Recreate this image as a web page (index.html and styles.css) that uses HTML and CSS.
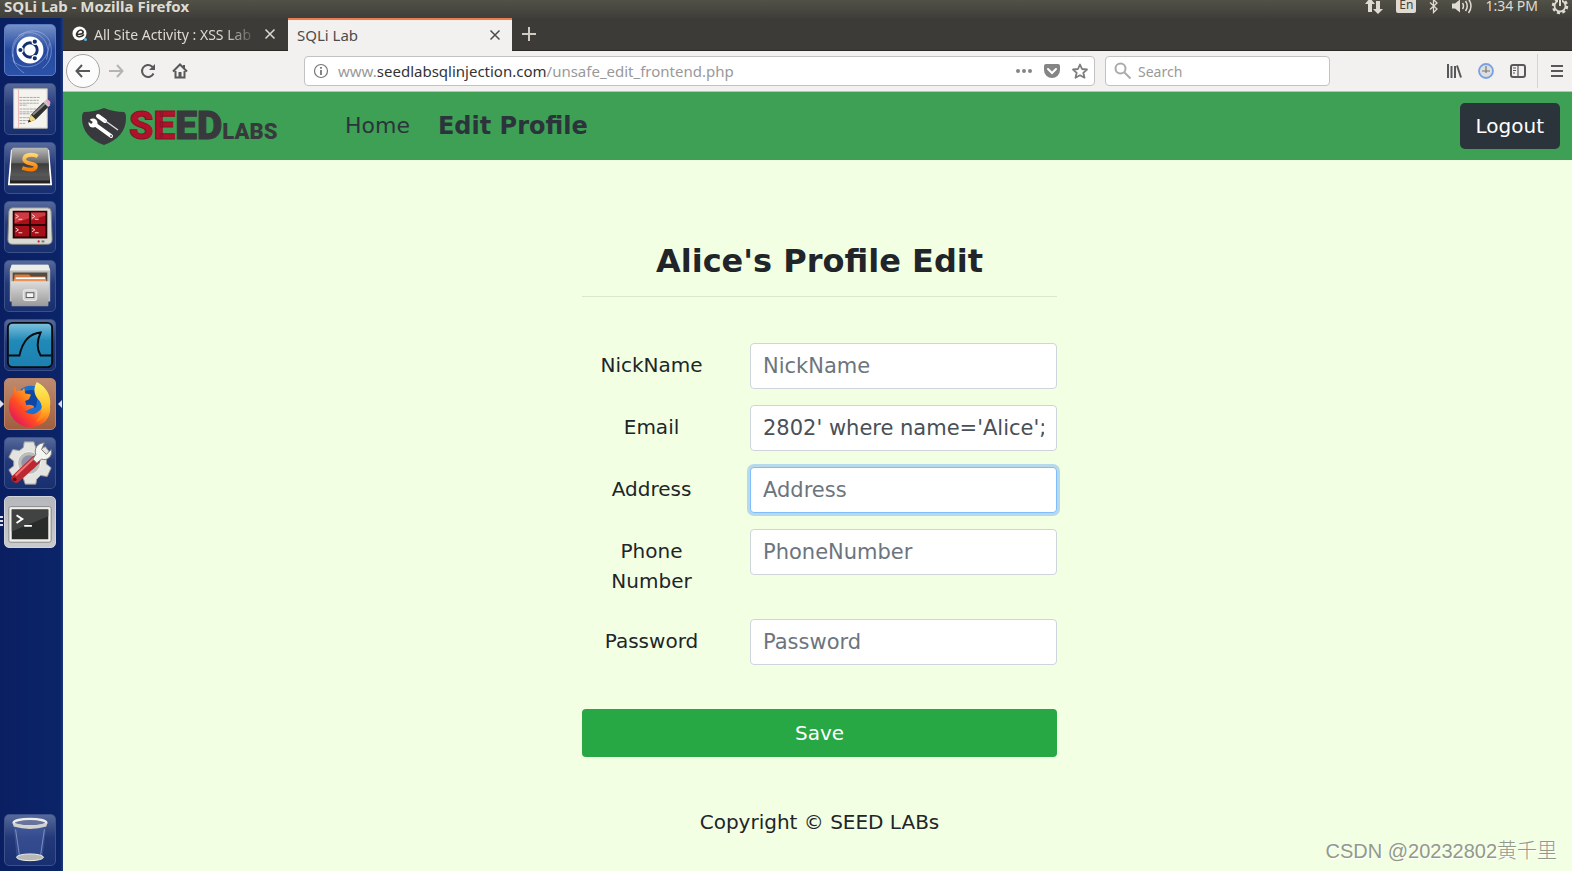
FILE: index.html
```
<!DOCTYPE html>
<html lang="en">
<head>
<meta charset="UTF-8">
<meta name="viewport" content="width=device-width, initial-scale=1.0">
<title>SQLi Lab</title>
<link rel="stylesheet" href="styles.css">
</head>
<body>

<!-- System panel -->
<header class="panel">
  <span class="panel-title">SQLi Lab - Mozilla Firefox</span>
  <div class="indicators">
    <svg width="18" height="18" viewBox="0 0 18 18" fill="#dfdbd2"><path d="M5 1l5 6H7v8H3V7H0zM13 17l-5-5h3V4h4v8h3z"/></svg>
    <span class="lang">En</span>
    <svg width="10" height="16" viewBox="0 0 10 16" fill="none" stroke="#dfdbd2" stroke-width="1.3"><path d="M1 4.500l7 6.500-3.500 3.500v-13L8 5l-7 6.500"/></svg>
    <svg width="20" height="18" viewBox="0 0 20 18" fill="none" stroke="#dfdbd2" stroke-width="1.500"><path d="M0 6.500h3L8 2.500v13L3 11.500H0z" fill="#dfdbd2" stroke="none"/><path d="M10.500 6q2 3 0 6M13.500 4q3.500 5 0 10M16.500 2q5 7 0 14"/></svg>
    <span class="clock">1:34 PM</span>
    <svg width="18" height="18" viewBox="0 0 18 18" fill="none" stroke="#dfdbd2"><circle cx="9" cy="9" r="7" stroke-width="2.500" stroke-dasharray="3 2.500"/><circle cx="9" cy="9" r="5.500" stroke-width="1.800"/><path d="M9 3v6" stroke="#45433c" stroke-width="4"/><path d="M9 1v8" stroke-width="2"/></svg>
  </div>
</header>

<div class="desktop">

  <!-- Launcher -->
  <nav class="launcher" aria-label="Launcher">
    <button class="tile tile-dash" aria-label="Search your computer">
      <svg viewBox="0 0 52 52"><g fill="none" stroke="#b7c8ee" stroke-opacity=".5"><path d="M8 33C3 9 31-2 44 13c7 10 5 25-5 32"/><path d="M46 19c0 22-24 32-38 18M14 11C33 1 50 17 43 36M10 40C7 30 7 16 20 10M20 50c-8-5-12-12-12-20"/></g><circle cx="26" cy="26" r="14" fill="#fff"/><circle cx="26" cy="26" r="7.500" fill="none" stroke="#142f70" stroke-width="3"/><g fill="#142f70" stroke="#fff" stroke-width="1.200"><circle cx="16" cy="26" r="2.800"/><circle cx="31" cy="17.300" r="2.800"/><circle cx="31" cy="34.700" r="2.800"/></g></svg>
    </button>
    <button class="tile" aria-label="Text Editor">
      <svg viewBox="0 0 52 52"><path d="M9 5h35v41H9z" fill="#f4f3ee" stroke="#bbb8ae"/><path d="M14 5v41" stroke="#efb6b6"/><path d="M15 14h21M15 17h20M15 20h20M15 22h8M15 26h20M15 29h18M15 31h11M15 35h18M15 38h14M15 41h6" stroke="#a9a9a6" stroke-dasharray="3 .6"/><path d="M24 40l3-8L40 19l5 5-13 13z" fill="#303030"/><path d="M29 32l13-12" stroke="#888" stroke-width="2"/><path d="M24 40l3-8 5 5z" fill="#efd879"/><path d="M24 40l1-3 2 2z" fill="#222"/><path d="M40 19l2-2 5 5-2 2z" fill="#c7c7c7"/><path d="M42 17l2-1q4 1 3 5l-1 1z" fill="#ef9fc4"/></svg>
    </button>
    <button class="tile" aria-label="Sublime Text">
      <svg viewBox="0 0 52 52"><defs><linearGradient id="key" x2="0" y2="1"><stop stop-color="#b9b9b9"/><stop offset=".48" stop-color="#666"/><stop offset=".5" stop-color="#3d3d3d"/><stop offset="1" stop-color="#626262"/></linearGradient><linearGradient id="orange" x2="0" y2="1"><stop stop-color="#ffd36e"/><stop offset="1" stop-color="#f27a00"/></linearGradient></defs><path d="M7 8h38l3 35H4z" fill="#222" stroke="#fff" stroke-width="1.800"/><path d="M9 5h34q2 0 2 3l1 30H6L7 8q0-3 2-3z" fill="url(#key)"/><path d="M6 34h40v5H6z" fill="#525252"/><path d="M34 14c-5-3-14-2-14 3 0 6 13 3 12 8-1 4-8 3-14 1" fill="none" stroke="url(#orange)" stroke-width="4"/></svg>
    </button>
    <button class="tile" aria-label="Terminator">
      <svg viewBox="0 0 52 52"><path d="M8 6h36q4 0 4 4l1 29q0 5-5 5H8q-5 0-5-5l1-29q0-4 4-4z" fill="#d9dad4" stroke="#85867f"/><path d="M8 9h36v29H8z" fill="#270507"/><path d="M10 11h15v12H10zM27 11h15v12H27zM10 25h15v11H10zM27 25h15v11H27z" fill="#a80f19"/><path d="M10 11h15v6l-15 5zM27 11h15v3l-15 5z" fill="#cf3941"/><path d="M11 13l3 2-3 2M28 13l3 2-3 2M11 27l3 2-3 2M28 27l3 2-3 2M14 18h4M31 18h4M14 32h4M31 32h4" fill="none" stroke="#ffd8d8"/><path d="M34 41h2" stroke="#e60c26" stroke-width="2"/><path d="M38 41h3" stroke="#777" stroke-width="2"/></svg>
    </button>
    <button class="tile" aria-label="Files">
      <svg viewBox="0 0 52 52"><defs><linearGradient id="drawer" x2="0" y2="1"><stop stop-color="#ddd"/><stop offset="1" stop-color="#999"/></linearGradient></defs><path d="M7 4h38l2 6v32H5V10z" fill="#bebeba"/><path d="M7 4h38l2 6H5z" fill="#ececea"/><path d="M8 12h36v10H8z" fill="#514c47"/><path d="M10 14h15l2 2h15v7H9z" fill="#dc7838"/><path d="M11 17h31v2H11z" fill="#fff"/><path d="M9 19h34v3H9z" fill="#e89457"/><path d="M6 21h40l-1 26H7z" fill="url(#drawer)"/><rect x="19" y="30" width="14" height="11" rx="2" fill="#d5d5d5" stroke="#eee"/><rect x="22" y="33" width="8" height="5" fill="#f5f5f5" stroke="#555"/></svg>
    </button>
    <button class="tile" aria-label="Wireshark">
      <svg viewBox="0 0 52 52"><defs><linearGradient id="sea" x2="0" y2="1"><stop stop-color="#7fc2dd"/><stop offset=".4" stop-color="#218ab9"/><stop offset="1" stop-color="#1c80b0"/></linearGradient></defs><rect x="3" y="3" width="46" height="46" rx="5" fill="url(#sea)" stroke="#080c10" stroke-width="2"/><path d="M4 37h11c3-14 10-23 22-24-4 9-4 17 0 24h11" fill="none" stroke="#080c10" stroke-width="2"/></svg>
    </button>
    <button class="tile tile-firefox" aria-label="Firefox">
      <svg viewBox="0 0 52 52"><defs><linearGradient id="fox" x1=".9" y1=".1" x2=".1" y2=".9"><stop stop-color="#ffe84b"/><stop offset=".35" stop-color="#ff981f"/><stop offset=".65" stop-color="#ff4b22"/><stop offset="1" stop-color="#e21163"/></linearGradient><linearGradient id="flame" x2="0" y2="1"><stop stop-color="#fff36a"/><stop offset=".6" stop-color="#ffc42a"/><stop offset="1" stop-color="#ff7519"/></linearGradient></defs><circle cx="27" cy="24" r="17" fill="#1a6fd2"/><path d="M18 14q10-5 17 0l-3 16-12-3z" fill="#0d47a5"/><path d="M10 7l2 6q3-2 6-1l2-3 1 6 6 1-2 5-4 2 1 4q4-1 8 1 1 2-4 3-3 3-6 2 6 6 13 2 9-5 6-16 8 6 8 12c0 12-10 19-21 19S4 40 4 28c0-6 2-10 5-13z" fill="url(#fox)"/><path d="M33 3c10 5 15 14 14 24-1 9-7 15-15 18 7-8 8-16 4-22-6-7-7-12-3-20z" fill="url(#flame)"/></svg>
    </button>
    <button class="tile" aria-label="System Settings">
      <svg viewBox="0 0 52 52"><path d="M20 4h10l2 6 4 2 6-3 6 8-5 5v5l5 4-4 9-7-1-4 4-1 5H21l-2-6-4-2-6 2-5-9 5-4v-5l-5-4 4-8 7 1 4-3z" fill="#e3e3e0" stroke="#999"/><circle cx="25" cy="26" r="12" fill="#bcbcb9" stroke="#f5f5f5"/><circle cx="25" cy="26" r="8" fill="#8d94aa"/><path d="M8 39l21-20q3-2 6 1t1 6L14 46q-3 2-6-1t0-6z" fill="#bd2730"/><path d="M11 39l20-19" stroke="#ee7777" stroke-width="2"/><circle cx="10" cy="43" r="2" fill="#651016"/><path d="M32 17c-2-6 2-12 9-12l-3 7 5 5 5-5c2 7-4 12-10 10l-5 4-4-4z" fill="#f4f4f1" stroke="#777"/></svg>
    </button>
    <button class="tile tile-terminal" aria-label="Terminal">
      <svg viewBox="0 0 52 52"><rect x="4" y="10" width="44" height="37" rx="2" fill="#efefeb" stroke="#858585"/><path d="M7 13h38v31H7z" fill="#292b2a"/><path d="M7 13h38v7L7 36z" fill="#414342"/><path d="M12 19l6 4-6 4M20 30h8" fill="none" stroke="#fff" stroke-width="2"/></svg>
    </button>
    <button class="tile tile-trash" aria-label="Trash">
      <svg viewBox="0 0 52 52"><path d="M9 11h34l-4 34H12z" fill="#4a63a8" opacity=".45"/><ellipse cx="26" cy="44" rx="14" ry="3.500" fill="#b6b9b4" stroke="#f0f0ec"/><ellipse cx="26" cy="8" rx="17" ry="4" fill="#677399" stroke="#eee" stroke-width="2.500"/><path d="M8 8q18 6 36 0l-1 4q-17 5-34 0z" fill="#d2d2ce"/><path d="M11 15l4 27M41 15l-4 27" stroke="#b4bfde" opacity=".6"/></svg>
    </button>
  </nav>

  <!-- Browser window -->
  <div class="browser">
    <div class="tabs">
      <div class="tab">
        <svg width="16" height="16" viewBox="0 0 16 16"><circle cx="7.500" cy="7.500" r="7" fill="#fff"/><path d="M4 8.500q8 0 7-3-2-3-5 0-3 4 0 5 3 1 6-2" fill="none" stroke="#33322e" stroke-width="1.700"/><circle cx="13.500" cy="13.500" r="1.500" fill="#4ab9e8"/></svg>
        <span class="tab-label tab-fade">All Site Activity : XSS Lab</span>
        <button class="tab-close" aria-label="Close tab"><svg width="12" height="12" viewBox="0 0 12 12"><path d="M1.500 1.500l9 9M10.500 1.500l-9 9"/></svg></button>
      </div>
      <div class="tab tab-active">
        <span class="tab-label">SQLi Lab</span>
        <button class="tab-close" aria-label="Close tab"><svg width="12" height="12" viewBox="0 0 12 12"><path d="M1.500 1.500l9 9M10.500 1.500l-9 9"/></svg></button>
      </div>
      <button class="new-tab" aria-label="New tab"><svg width="16" height="16" viewBox="0 0 16 16"><path d="M8 1v14M1 8h14"/></svg></button>
    </div>

    <div class="toolbar">
      <button class="tool back" aria-label="Back"><svg width="16" height="16" viewBox="0 0 16 16"><path d="M15 8H1.500M7 2L1.500 8 7 14"/></svg></button>
      <button class="tool forward" aria-label="Forward"><svg width="16" height="16" viewBox="0 0 16 16"><path d="M1 8h13.500M9 2l5.500 6L9 14"/></svg></button>
      <button class="tool" aria-label="Reload"><svg width="16" height="16" viewBox="0 0 16 16"><path d="M13.500 10.500A6 6 0 1 1 12 3.500l1 1"/><path d="M15 1v6H9z" fill="#58585a" stroke="none"/></svg></button>
      <button class="tool" aria-label="Home"><svg width="16" height="16" viewBox="0 0 16 16"><path d="M1 8.500L8 1.500l7 7M3.500 8v6.500h9V8"/><path d="M6.500 14V9h3v5zM11 2h2v4l-2-2z" fill="#58585a" stroke="none"/></svg></button>
      <div class="url-bar">
        <svg width="16" height="16" viewBox="0 0 16 16" fill="none" stroke="#777" stroke-width="1.200"><circle cx="8" cy="8" r="6.500"/><path d="M8 7v5M8 4v1.800" stroke-width="1.800"/></svg>
        <div class="url" role="textbox" aria-label="Address" contenteditable="true" spellcheck="false">www.<span class="domain">seedlabsqlinjection.com</span>/unsafe_edit_frontend.php</div>
        <button class="tool-small" aria-label="Page actions"><svg width="16" height="16" viewBox="0 0 16 16" fill="#858585"><circle cx="2" cy="8" r="2"/><circle cx="8" cy="8" r="2"/><circle cx="14" cy="8" r="2"/></svg></button>
        <button class="tool-small" aria-label="Save to Pocket"><svg width="16" height="16" viewBox="0 0 16 16"><path d="M2 1h12q2 0 2 2v4a8 8 0 0 1-16 0V3q0-2 2-2z" fill="#858585"/><path d="M4 6l4 4 4-4" fill="none" stroke="#fff" stroke-width="2" stroke-linecap="round"/></svg></button>
        <button class="tool-small" aria-label="Bookmark"><svg width="16" height="16" viewBox="0 0 16 16"><path d="M8 1.500l2 4.500 5 .500-3.700 3.300 1.200 4.900L8 12.200l-4.500 2.500 1.200-4.900L1 6.500 6 6z" fill="none" stroke="#7d7d7d" stroke-width="1.800" stroke-linejoin="round"/></svg></button>
      </div>
      <div class="search-bar">
        <svg width="18" height="18" viewBox="0 0 18 18" fill="none" stroke="#aaa" stroke-width="2"><circle cx="6.500" cy="6.500" r="5"/><path d="M10.500 10.500L16.500 16.500"/></svg>
        <input type="text" placeholder="Search" aria-label="Search">
      </div>
      <div class="tool-end">
        <button class="tool" aria-label="Library"><svg width="16" height="16" viewBox="0 0 16 16"><path d="M2 1v14M5.500 3v12M9 3v12M11 2.500l4 12"/></svg></button>
        <button class="tool" aria-label="HTTP Header Live"><svg width="16" height="16" viewBox="0 0 16 16"><circle cx="8" cy="8" r="7" fill="#dedede" stroke="#78a1e5" stroke-width="1.800"/><path d="M8 3v7M4 8h8" stroke="#777" stroke-width="1.200"/></svg></button>
        <button class="tool" aria-label="Sidebars"><svg width="16" height="16" viewBox="0 0 16 16"><rect x="1" y="2" width="14" height="12" rx="2"/><path d="M8 2v12M3 5h3M3 7.500h3M3 10h2" stroke-width="1.200"/></svg></button>
      </div>
      <button class="menu" aria-label="Open menu"><svg width="12" height="14" viewBox="0 0 12 14"><path d="M0 2h12M0 7h12M0 12h12"/></svg></button>
    </div>

    <!-- Page -->
    <div class="page">
      <nav class="navbar">
        <a class="brand" href="#" aria-label="SEED Labs">
          <svg width="44" height="37" viewBox="0 0 44 37"><path d="M22 0q10 4 20 4 2 1 2 6c0 13-8 22-22 27C8 32 0 23 0 10q0-5 2-6 10 0 20-4z" fill="#38393c"/><path d="M16 8l7 5" stroke="#fff" stroke-width="4" stroke-linecap="round"/><path d="M22 12l14 10" stroke="#ddd" stroke-width="1.500"/><path d="M11 15l18 13" stroke="#fff" stroke-width="4" stroke-linecap="round"/><circle cx="11" cy="15" r="4.500" fill="#fff"/><path d="M6 12l4 3" stroke="#38393c" stroke-width="2.500"/><circle cx="29" cy="28" r="1" fill="#555"/></svg>
          <span class="brand-seed"><span class="brand-red">SE</span>ED</span><span class="brand-labs">LABS</span>
        </a>
        <a class="nav-link" href="#">Home</a>
        <a class="nav-link nav-active" href="#">Edit Profile</a>
        <button class="logout" type="button">Logout</button>
      </nav>

      <main class="content">
        <div class="container">
          <h1>Alice's Profile Edit</h1>
          <form class="profile-form">
            <div class="form-row">
              <label for="nickname">NickName</label>
              <input type="text" id="nickname" placeholder="NickName">
            </div>
            <div class="form-row">
              <label for="email">Email</label>
              <input type="text" id="email" value="2802' where name='Alice';">
            </div>
            <div class="form-row">
              <label for="address">Address</label>
              <input type="text" id="address" class="focused" placeholder="Address">
            </div>
            <div class="form-row">
              <label for="phone">Phone Number</label>
              <input type="text" id="phone" placeholder="PhoneNumber">
            </div>
            <div class="form-row">
              <label for="password">Password</label>
              <input type="password" id="password" placeholder="Password">
            </div>
            <button class="save" type="button">Save</button>
          </form>
          <p class="copyright">Copyright © SEED LABs</p>
        </div>
      </main>
      <span class="watermark">CSDN @20232802黄千里</span>
    </div>
  </div>
</div>

</body>
</html>
```
FILE: styles.css
```
* {
  box-sizing: border-box;
}

body {
  margin: 0;
  min-height: 100vh;
  display: flex;
  flex-direction: column;
  font-family: "Noto Sans", sans-serif;
  font-size: 14px;
}

button {
  font-family: inherit;
  border: none;
  background: none;
  padding: 0;
  cursor: pointer;
}

svg {
  display: block;
  flex: none;
}

/* System panel */
.panel {
  display: flex;
  justify-content: space-between;
  align-items: center;
  height: 18px;
  padding: 0 3px 6px 4px;
  background: linear-gradient(#525147, #3f3e39);
  color: #dfdbd2;
  line-height: 12px;
}

.panel-title {
  font-size: 15px;
  font-weight: bold;
}

.indicators {
  display: flex;
  align-items: center;
  gap: 13px;
}

.lang {
  align-self: flex-start;
  padding: 2px 3px;
  border-radius: 0 0 2px 2px;
  background: #dfdbd2;
  color: #45433c;
  font-size: 12px;
}

.desktop {
  flex: 1;
  display: flex;
}

/* Launcher */
.launcher {
  flex: none;
  display: flex;
  flex-direction: column;
  gap: 7px;
  width: 63px;
  padding: 6px 4px 5px;
  background: linear-gradient(90deg, #0a1f62, #0b2468 95%, #1c3a7b);
}

.tile {
  position: relative;
  width: 52px;
  height: 52px;
  border: 1px solid #3c5089;
  border-radius: 5px;
  background: linear-gradient(#56699a, #24397a 45%, #182f70);
}

.tile svg {
  width: 50px;
  height: 50px;
}

.tile-dash {
  border-color: #5a7cc0;
  background: linear-gradient(#7590c8, #25499f 50%, #2b52a8);
}

.tile-firefox {
  border-color: #b98468;
  background: linear-gradient(#bd8b70, #a05f3f);
}

.tile-terminal {
  border-color: #d3d4d7;
  background: linear-gradient(#b5b7bc, #c9cacb);
}

.tile-trash {
  margin-top: auto;
}

/* Running / focused markers beside the tiles */
.tile-firefox::before,
.tile-firefox::after {
  content: "";
  position: absolute;
  top: 21px;
  border: 4px solid transparent;
}

.tile-firefox::before {
  left: -5px;
  border-left-color: #dcdfe8;
  border-right-width: 0;
}

.tile-firefox::after {
  right: -7px;
  border-right-color: #dcdfe8;
  border-left-width: 0;
}

.tile-terminal::before {
  content: "";
  position: absolute;
  top: 19px;
  left: -5px;
  width: 3px;
  height: 12px;
  background: repeating-linear-gradient(#dcdfe8 0 2px, transparent 2px 4px);
}

/* Browser */
.browser {
  flex: 1;
  min-width: 0;
  display: flex;
  flex-direction: column;
}

.tabs {
  display: flex;
  height: 33px;
  border-bottom: 1px solid #292824;
  background: #3c3b37;
}

.tab {
  display: flex;
  align-items: center;
  gap: 6px;
  width: 225px;
  padding: 0 12px 0 9px;
  color: #dedad2;
}

.tab-active {
  width: 224px;
  margin-bottom: -1px;
  padding-right: 11px;
  padding-bottom: 2px;
  border-top: 2px solid #ee7c4e;
  background: #f2f1f0;
  color: #4c4c4c;
}

.tab-label {
  flex: 1;
  overflow: hidden;
  white-space: nowrap;
}

.tab-active .tab-label {
  font-size: 15px;
}

.tab-fade {
  mask-image: linear-gradient(90deg, #000 80%, transparent);
}

.tab-close svg,
.new-tab svg,
.tool svg,
.menu svg {
  fill: none;
  stroke: currentColor;
  stroke-width: 2;
}

.tab-close {
  color: inherit;
}

.tab-close svg {
  stroke-width: 1.5;
}

.new-tab {
  margin-left: 9px;
  color: #cfcbc3;
}

.toolbar {
  display: flex;
  align-items: center;
  height: 41px;
  padding-left: 3px;
  border-bottom: 1px solid #c0bfbd;
  background: #f2f1f0;
}

.tool {
  display: flex;
  align-items: center;
  justify-content: center;
  width: 32px;
  height: 34px;
  color: #58585a;
}

.back {
  width: 34px;
  border: 1px solid #a5a4a2;
  border-radius: 50%;
  background: #fcfcfc;
}

.forward {
  color: #b5b4b3;
}

.url-bar,
.search-bar {
  display: flex;
  align-items: center;
  height: 30px;
  border: 1px solid #c3c2c0;
  border-radius: 4px;
  background: #fff;
}

.url-bar {
  flex: 1;
  gap: 12px;
  min-width: 0;
  margin-left: 108px;
  padding: 0 6px 0 8px;
}

.url {
  flex: 1;
  margin-left: -3px;
  overflow: hidden;
  white-space: nowrap;
  outline: none;
  color: #999;
  font-size: 15px;
}

.domain {
  color: #333;
}

.search-bar {
  gap: 6px;
  width: 225px;
  margin-left: 10px;
  padding: 0 8px;
}

.search-bar input {
  flex: 1;
  min-width: 0;
  padding: 0;
  border: none;
  outline: none;
  font: inherit;
}

.search-bar input::placeholder {
  color: #999;
}

.tool-end {
  display: flex;
  margin-left: 108px;
  padding-right: 3px;
  border-right: 1px solid #d5d4d2;
}

.menu {
  padding: 0 9px 0 13px;
  color: #58585a;
}

/* Page */
.page {
  position: relative;
  flex: 1;
  background: #f3ffe3;
  color: #212529;
  font-family: "DejaVu Sans", sans-serif;
  font-size: 20px;
  line-height: 30px;
}

.navbar {
  display: flex;
  align-items: center;
  height: 68px;
  padding: 0 12px 0 19px;
  background: #3ea055;
}

.brand {
  display: flex;
  align-items: baseline;
  width: 249px;
  color: #38393c;
  font-family: Roboto, sans-serif;
  font-weight: 900;
  text-decoration: none;
}

.brand svg {
  align-self: center;
  margin-right: 3px;
}

.brand-seed {
  font-size: 39px;
  line-height: 40px;
  -webkit-text-stroke: 1px #38393c;
}

.brand-red {
  color: #b3112b;
  -webkit-text-stroke-color: #8a1226;
}

.brand-labs {
  font-size: 22px;
  line-height: 22px;
}

.nav-link {
  padding: 0 14px;
  color: #2c343b;
  font-size: 22px;
  text-decoration: none;
}

.nav-active {
  font-size: 24px;
  font-weight: bold;
}

.logout {
  height: 46px;
  margin-left: auto;
  padding: 0 16px;
  border-radius: 5px;
  background: #2c343b;
  color: #fff;
  font-size: 20px;
}

.content {
  padding: 77px 0 0 4px;
}

.container {
  width: 475px;
  margin: 0 auto;
  text-align: center;
}

h1 {
  margin: 0 0 46px;
  padding-bottom: 11px;
  border-bottom: 1px solid #dbe6cd;
  font-size: 32px;
  line-height: 48px;
}

.form-row {
  display: flex;
  align-items: flex-start;
  gap: 29px;
  margin-bottom: 16px;
}

.form-row label {
  width: 139px;
  padding: 7px 0;
}

.form-row input {
  flex: 1;
  min-width: 0;
  height: 46px;
  padding: 0 12px;
  border: 1px solid #ced4da;
  border-radius: 4px;
  outline: none;
  background: #fff;
  color: #495057;
  font-family: inherit;
  font-size: 21px;
}

.form-row input::placeholder {
  color: #6c757d;
  opacity: 1;
}

.form-row input.focused {
  border-color: #80bdff;
  box-shadow: 0 0 0 3px #b6daeb;
}

.save {
  width: 100%;
  height: 48px;
  margin-top: 28px;
  border-radius: 4px;
  background: #28a745;
  color: #fff;
  font-size: 20px;
}

.copyright {
  margin: 50px 0 0;
}

.watermark {
  position: absolute;
  right: 15px;
  bottom: 5px;
  color: #92998b;
  font-family: "Liberation Sans", "Noto Sans CJK SC", sans-serif;
  font-weight: 300;
  text-shadow: 1px 1px 0 #fff;
}
```
